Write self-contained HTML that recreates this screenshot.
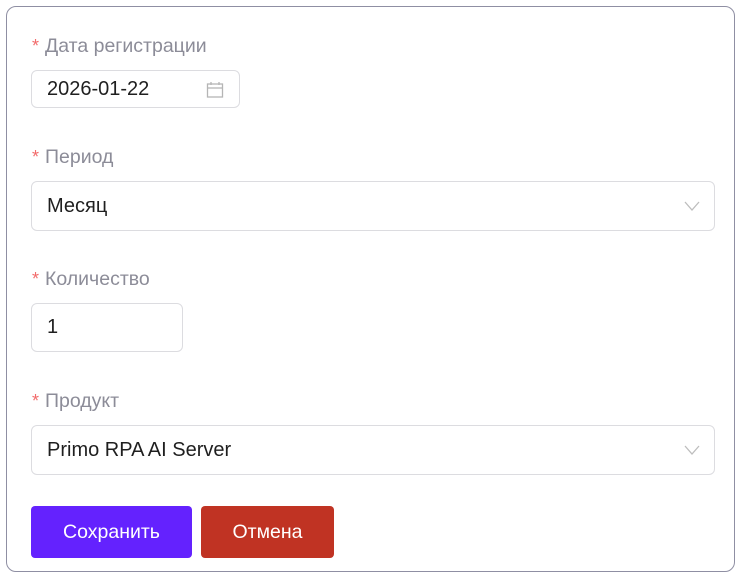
<!DOCTYPE html>
<html><head><meta charset="utf-8"><style>
*{box-sizing:border-box;margin:0;padding:0}
body{width:743px;height:580px;background:#fff;font-family:"Liberation Sans","DejaVu Sans",sans-serif;position:relative;overflow:hidden}
.card{position:absolute;left:6px;top:6px;width:729px;height:566px;border:1px solid #8f8fa3;border-radius:10px;background:#fff}
.lbl{position:absolute;left:32px;font-size:19.5px;color:#8c8c98}
.lbl b{color:#f26b6b;font-weight:normal;margin-right:6px;font-size:18px}
.in{position:absolute;left:31px;border:1px solid #dcdce0;border-radius:6px;font-size:20px;color:#1f1f1f;padding-left:15px;display:flex;align-items:center}
.btn{position:absolute;top:506px;height:52px;border-radius:4px;color:#fff;font-size:19.5px;display:flex;align-items:center;justify-content:center}
</style></head><body>
<div class="card"></div>
<div class="lbl" style="top:35px"><b>*</b>Дата регистрации</div>
<div class="in" style="top:70px;width:209px;height:38px">2026-01-22
<svg style="position:absolute;left:174px;top:10px" width="18" height="18" viewBox="0 0 18 18" fill="none" stroke="#b5b5b5" stroke-width="1.3"><rect x="1.5" y="3" width="15" height="13"/><line x1="1.5" y1="7" x2="16.5" y2="7"/><line x1="5" y1="1" x2="5" y2="4"/><line x1="13" y1="1" x2="13" y2="4"/></svg></div>
<div class="lbl" style="top:146px"><b>*</b>Период</div>
<div class="in" style="top:181px;width:684px;height:50px">Месяц
<svg style="position:absolute;left:652px;top:19px" width="16" height="10" viewBox="0 0 16 10" fill="none" stroke="#bdbdbd" stroke-width="1.3"><polyline points="1,1 8,9 15,1"/></svg></div>
<div class="lbl" style="top:268px"><b>*</b>Количество</div>
<div class="in" style="top:303px;width:152px;height:49px">1</div>
<div class="lbl" style="top:390px"><b>*</b>Продукт</div>
<div class="in" style="top:425px;width:684px;height:50px">Primo RPA AI Server
<svg style="position:absolute;left:652px;top:19px" width="16" height="10" viewBox="0 0 16 10" fill="none" stroke="#bdbdbd" stroke-width="1.3"><polyline points="1,1 8,9 15,1"/></svg></div>
<div class="btn" style="left:31px;width:161px;background:#6422fe">Сохранить</div>
<div class="btn" style="left:201px;width:133px;background:#c03323">Отмена</div>
</body></html>
